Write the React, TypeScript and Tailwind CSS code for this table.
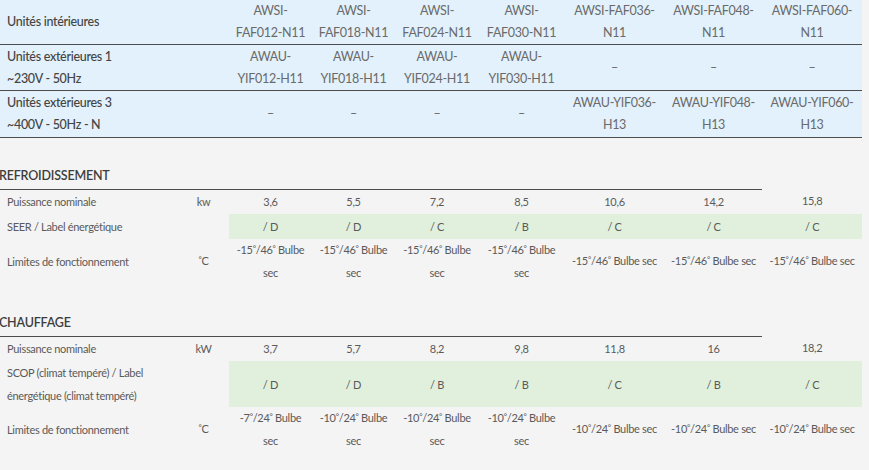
import React from "react";

const topCols = [229, 83, 83, 84, 85, 101, 97, 100];
const lowCols = [178, 51, 83, 83, 84, 85, 101, 97, 100];

function Two({ a, b }: { a: string; b: string }) {
  return (
    <>
      <div>{a}</div>
      <div>{b}</div>
    </>
  );
}

const indoor: [string, string][] = [
  ["AWSI-", "FAF012-N11"],
  ["AWSI-", "FAF018-N11"],
  ["AWSI-", "FAF024-N11"],
  ["AWSI-", "FAF030-N11"],
  ["AWSI-FAF036-", "N11"],
  ["AWSI-FAF048-", "N11"],
  ["AWSI-FAF060-", "N11"],
];
const ext1: ([string, string] | null)[] = [
  ["AWAU-", "YIF012-H11"],
  ["AWAU-", "YIF018-H11"],
  ["AWAU-", "YIF024-H11"],
  ["AWAU-", "YIF030-H11"],
  null,
  null,
  null,
];
const ext3: ([string, string] | null)[] = [
  null,
  null,
  null,
  null,
  ["AWAU-YIF036-", "H13"],
  ["AWAU-YIF048-", "H13"],
  ["AWAU-YIF060-", "H13"],
];

function TopRow({
  label,
  cells,
  h,
}: {
  label: [string, string] | [string];
  cells: ([string, string] | null)[];
  h: string;
}) {
  return (
    <tr className={`border-b border-[#4d4d4d] ${h}`}>
      <td className="pl-[7px] align-middle text-[#444] font-medium">
        {label.map((l, i) => (
          <div key={i}>{l}</div>
        ))}
      </td>
      {cells.map((c, i) => (
        <td key={i} className="text-center align-middle text-[#6a6a6a]">
          {c ? <Two a={c[0]} b={c[1]} /> : <div>–</div>}
        </td>
      ))}
    </tr>
  );
}

function Deg() {
  return <span className="text-[8px] relative -top-[3px]">°</span>;
}

function Lim({ a, b }: { a: string; b: string }) {
  return (
    <>
      -{a}
      <Deg />/{b}
      <Deg />
    </>
  );
}

function Section({
  title,
  power,
  unitP,
  eff,
  effLabel,
  limits,
  effH,
  headH,
}: {
  title: string;
  power: string[];
  unitP: string;
  eff: string[];
  effLabel: React.ReactNode;
  limits: [string, string][];
  effH: string;
  headH: string;
}) {
  return (
    <>
      <tr>
        <td colSpan={8} className={`${headH} align-bottom border-b border-[#4d4d4d] pb-[3px]`}>
          <div className="ml-[-1px] text-[12.5px] leading-[20px] font-semibold text-[#3d3d3d] tracking-[-0.2px]">
            {title}
          </div>
        </td>
        <td />
      </tr>
      <tr className="h-[25px]">
        <td className="pl-[7px]">Puissance nominale</td>
        <td className="text-center">{unitP}</td>
        {power.map((p, i) => (
          <td key={i} className={`text-center ${i === 6 ? "relative -top-[1px]" : ""}`}>
            {p}
          </td>
        ))}
      </tr>
      <tr className={effH}>
        <td className="pl-[7px] leading-[23px]">{effLabel}</td>
        <td />
        {eff.map((e, i) => (
          <td key={i} className="text-center bg-[#e1f0dd]">
            {e}
          </td>
        ))}
      </tr>
      <tr className="h-[43px]">
        <td className="pl-[7px]">Limites de fonctionnement</td>
        <td className="text-center">
          <Deg />C
        </td>
        {limits.map((l, i) =>
          i < 4 ? (
            <td key={i} className="text-center">
              <div className="whitespace-nowrap">
                <Lim a={l[0]} b={l[1]} /> Bulbe
              </div>
              <div>sec</div>
            </td>
          ) : (
            <td key={i} className="text-center whitespace-nowrap">
              <Lim a={l[0]} b={l[1]} /> Bulbe sec
            </td>
          )
        )}
      </tr>
    </>
  );
}

const lim15: [string, string][] = Array.from({ length: 7 }, () => ["15", "46"] as [string, string]);
const limHeat: [string, string][] = [
  ["7", "24"],
  ["10", "24"],
  ["10", "24"],
  ["10", "24"],
  ["10", "24"],
  ["10", "24"],
  ["10", "24"],
];

export default function App() {
  return (
    <div className="w-[869px] h-[470px] bg-[#f4f4f4] overflow-hidden">
      <table
        className="table-fixed border-collapse w-[862px] bg-[#e2f1fb] text-[12.5px] leading-[22px] tracking-[-0.3px]"
        style={{ fontFamily: "Lato, 'Open Sans', sans-serif" }}
      >
        <colgroup>
          {topCols.map((w, i) => (
            <col key={i} style={{ width: w }} />
          ))}
        </colgroup>
        <tbody>
          <TopRow label={["Unités intérieures"]} cells={indoor} h="h-[44px]" />
          <TopRow label={["Unités extérieures 1", "~230V - 50Hz"]} cells={ext1} h="h-[46px]" />
          <TopRow label={["Unités extérieures 3", "~400V - 50Hz - N"]} cells={ext3} h="h-[47px]" />
        </tbody>
      </table>
      <table
        className="table-fixed border-collapse w-[862px] text-[11px] leading-[21px] text-[#5a5a5a] tracking-[-0.3px]"
        style={{ fontFamily: "Lato, 'Open Sans', sans-serif" }}
      >
        <colgroup>
          {lowCols.map((w, i) => (
            <col key={i} style={{ width: w }} />
          ))}
        </colgroup>
        <tbody>
          <Section
            title="REFROIDISSEMENT"
            power={["3,6", "5,5", "7,2", "8,5", "10,6", "14,2", "15,8"]}
            unitP="kw"
            eff={["/ D", "/ D", "/ C", "/ B", "/ C", "/ C", "/ C"]}
            effLabel="SEER / Label énergétique"
            limits={lim15}
            effH="h-[25px]"
            headH="h-[51px]"
          />
          <Section
            title="CHAUFFAGE"
            power={["3,7", "5,7", "8,2", "9,8", "11,8", "16", "18,2"]}
            unitP="kW"
            eff={["/ D", "/ D", "/ B", "/ B", "/ C", "/ B", "/ C"]}
            effLabel={
              <>
                <div>SCOP (climat tempéré) / Label</div>
                <div>énergétique (climat tempéré)</div>
              </>
            }
            limits={limHeat}
            effH="h-[46px]"
            headH="h-[53px]"
          />
        </tbody>
      </table>
    </div>
  );
}
